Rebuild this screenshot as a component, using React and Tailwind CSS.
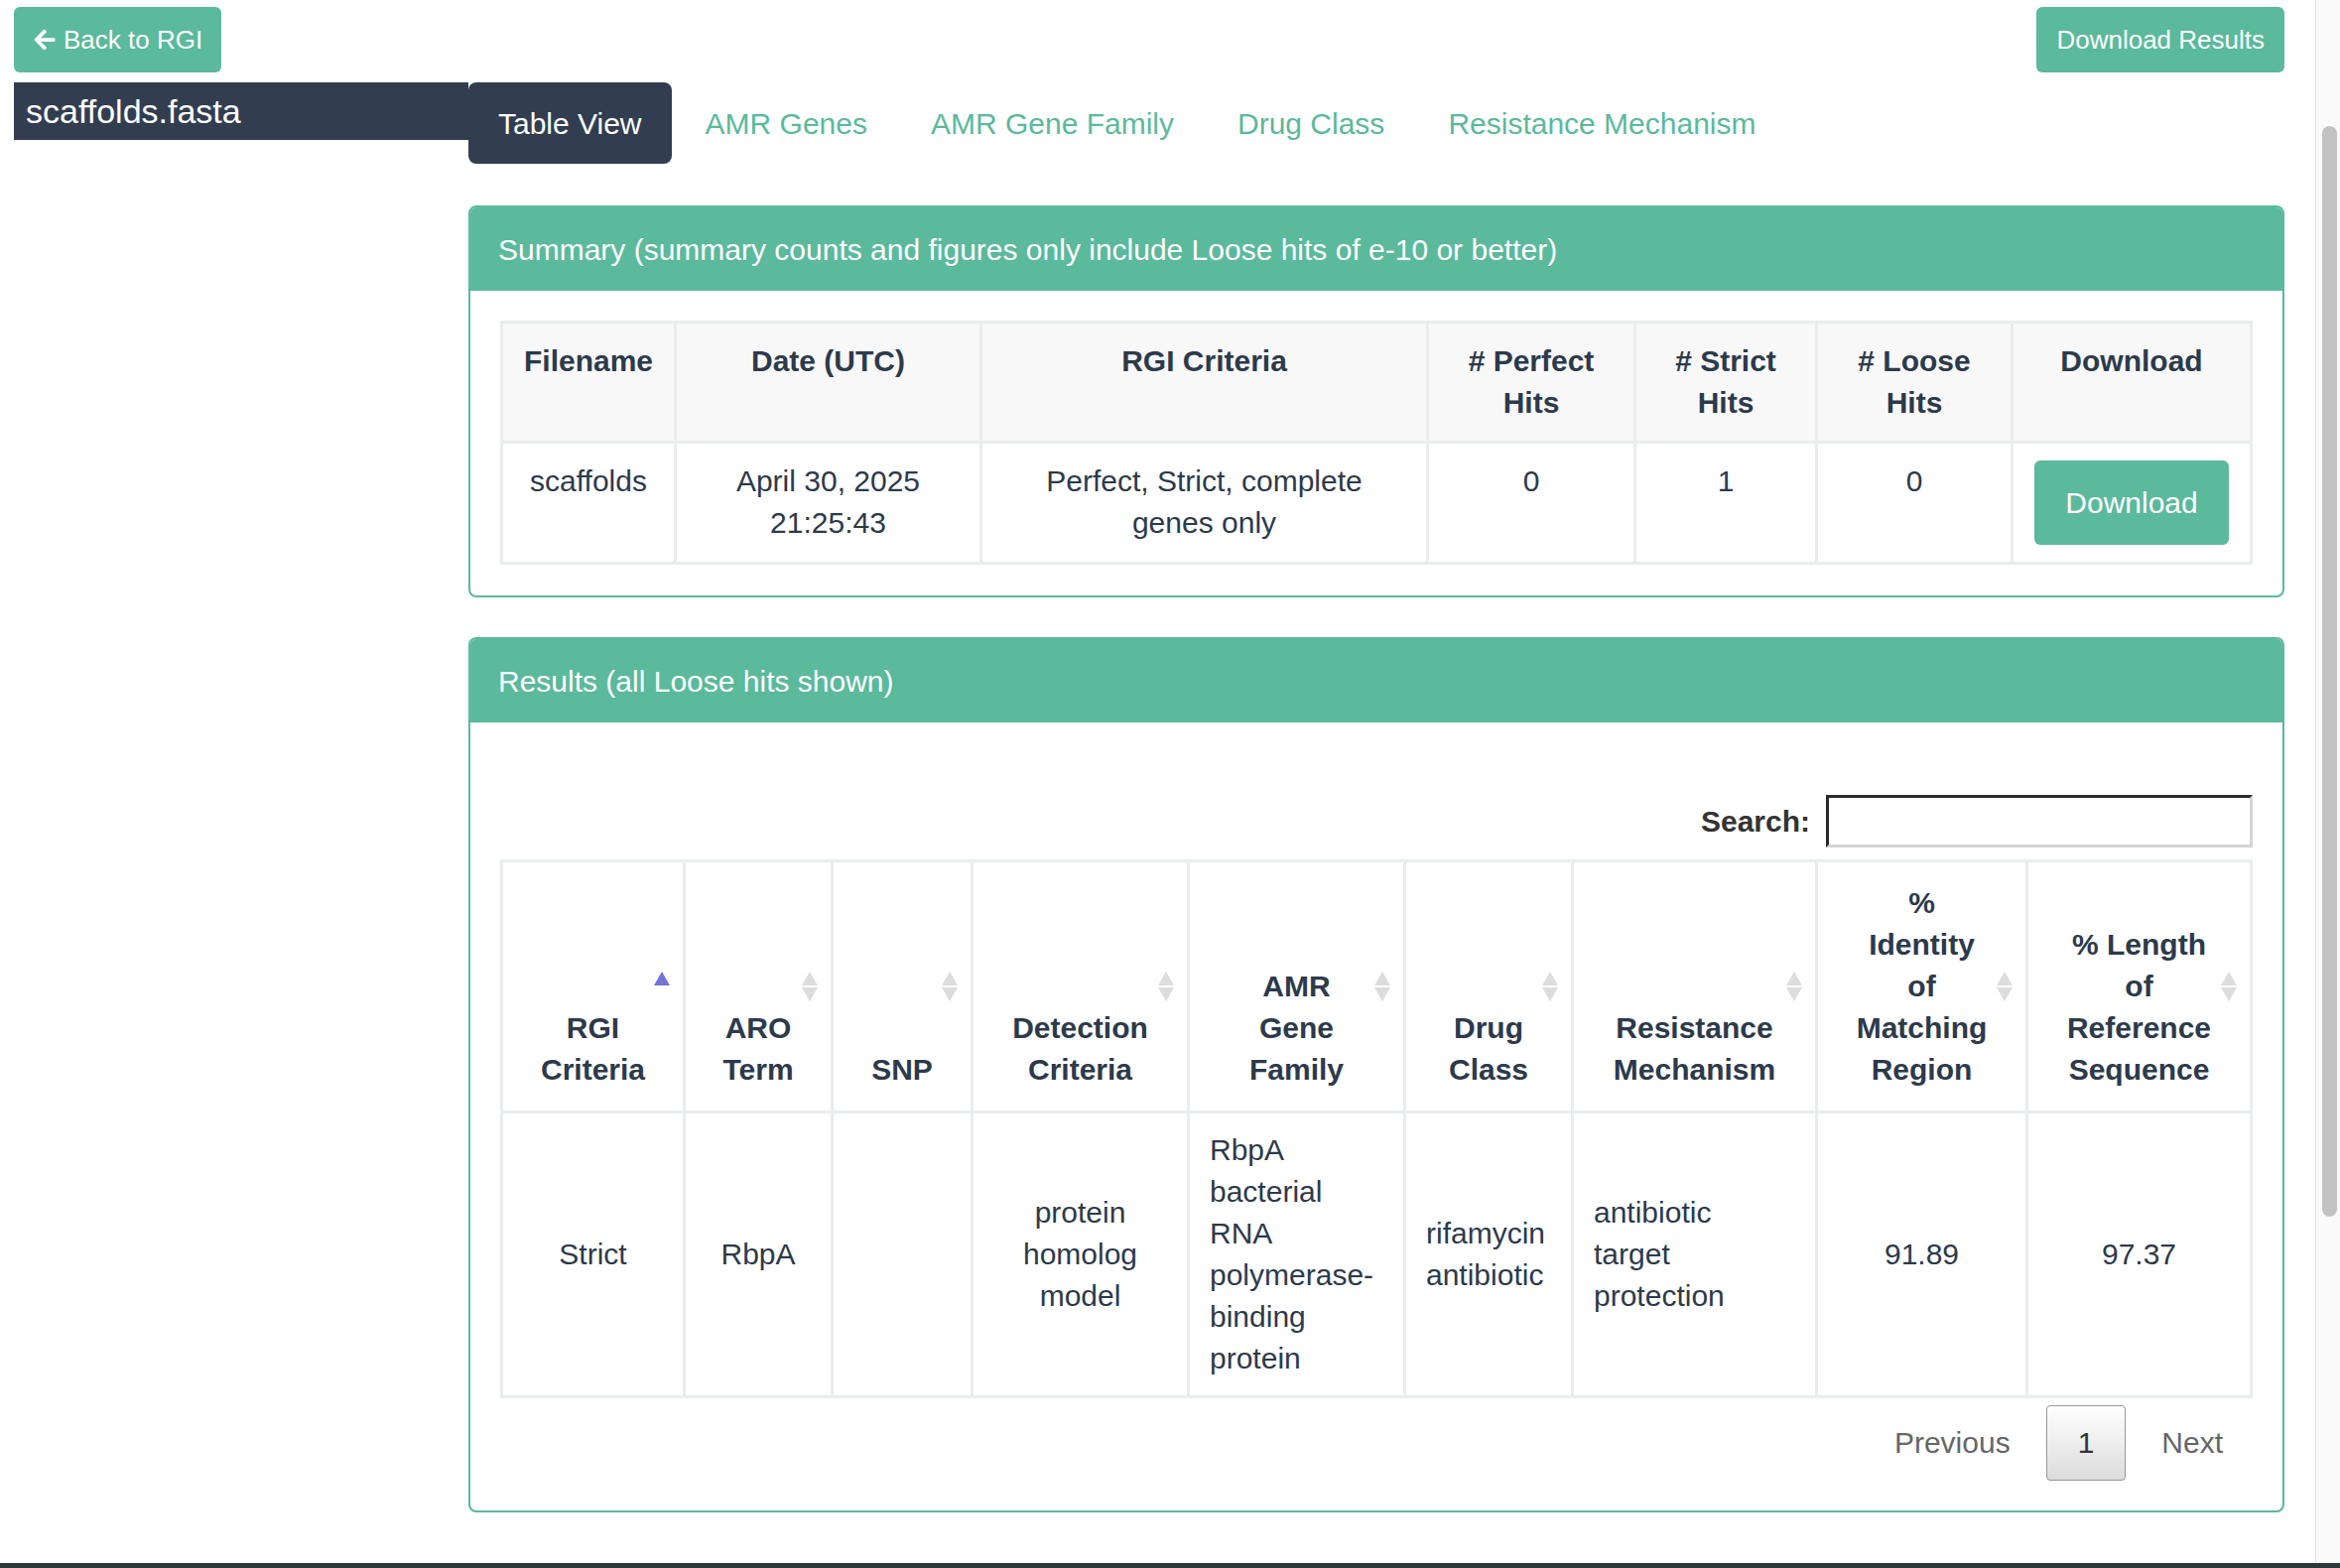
import { FaArrowLeft } from 'react-icons/fa'

const tabs = ['AMR Genes', 'AMR Gene Family', 'Drug Class', 'Resistance Mechanism']

const summaryCols = [175, 308, 450, 209, 183, 197, 241]
const summaryHead = [['Filename'], ['Date (UTC)'], ['RGI Criteria'], ['# Perfect', 'Hits'], ['# Strict', 'Hits'], ['# Loose', 'Hits'], ['Download']]

const resultCols = [184, 149, 141, 218, 218, 169, 246, 212, 226]
const resultHead = [
  { lines: ['RGI', 'Criteria'], sort: 'asc' },
  { lines: ['ARO', 'Term'] },
  { lines: ['SNP'] },
  { lines: ['Detection', 'Criteria'] },
  { lines: ['AMR', 'Gene', 'Family'] },
  { lines: ['Drug', 'Class'] },
  { lines: ['Resistance', 'Mechanism'] },
  { lines: ['%', 'Identity', 'of', 'Matching', 'Region'] },
  { lines: ['% Length', 'of', 'Reference', 'Sequence'] },
]
const resultRow = [
  { lines: ['Strict'] },
  { lines: ['RbpA'] },
  { lines: [] },
  { lines: ['protein', 'homolog', 'model'] },
  { lines: ['RbpA', 'bacterial', 'RNA', 'polymerase-', 'binding', 'protein'], left: true },
  { lines: ['rifamycin', 'antibiotic'], left: true },
  { lines: ['antibiotic', 'target', 'protection'], left: true },
  { lines: ['91.89'] },
  { lines: ['97.37'] },
]

const Lines = ({ lines }) => lines.map((l, i) => (
  <span key={i}>{i > 0 && <br />}{l}</span>
))

const SortIcon = ({ dir }) => (
  <svg className="absolute right-[13px] top-1/2 -translate-y-1/2" width="16" height="30" viewBox="0 0 16 30">
    {dir === 'asc' ? (
      <path d="M8 0 L16 14 L0 14 Z" fill="#7272d8" />
    ) : (
      <>
        <path d="M8 0 L16 14 L0 14 Z" fill="#dddddd" />
        <path d="M0 16 L16 16 L8 30 Z" fill="#dddddd" />
      </>
    )}
  </svg>
)

const Panel = ({ title, children, className = '' }) => (
  <div className={`overflow-hidden rounded-[8px] border-2 border-[#5bb99c] ${className}`}>
    <div className="flex h-[84px] items-center bg-[#5bb99c] px-[28px] text-[30px] text-white">{title}</div>
    {children}
  </div>
)

export default function App() {
  return (
    <div className="flex h-[1580px] w-full flex-col overflow-hidden bg-white font-['Liberation_Sans',Arial,sans-serif]">
      <div className="flex min-h-0 flex-1">
        <div className="flex-1 pl-[14px] pr-[31px] pt-[7px]">
          <div className="flex items-start justify-between">
            <button className="flex h-[66px] items-center gap-[7px] rounded-[6px] bg-[#5bb99c] px-[19px] text-[26px] text-white">
              <FaArrowLeft size={24} />
              Back to RGI
            </button>
            <button className="h-[66px] rounded-[6px] bg-[#5bb99c] px-[20px] text-[26px] text-white">Download Results</button>
          </div>

          <div className="mt-[10px] flex">
            <div className="w-[458px] shrink-0">
              <div className="flex h-[58px] items-center bg-[#323e50] pl-[12px] text-[34px] text-white">scaffolds.fasta</div>
            </div>

            <div className="w-[1830px]">
              <div className="flex h-[82px]">
                <div className="flex items-center rounded-[8px] bg-[#323e50] px-[30px] text-[30px] text-white">Table View</div>
                {tabs.map((t) => (
                  <div key={t} className="ml-[4px] flex items-center px-[30px] text-[30px] text-[#5bb99c]">{t}</div>
                ))}
              </div>

              <Panel title="Summary (summary counts and figures only include Loose hits of e-10 or better)" className="mt-[42px]">
                <div className="px-[30px] pb-[31px] pt-[30px]">
                  <table className="w-full table-fixed border-collapse text-[30px] leading-[42px] text-[#2c3a4b]">
                    <colgroup>
                      {summaryCols.map((w, i) => <col key={i} style={{ width: w }} />)}
                    </colgroup>
                    <thead>
                      <tr>
                        {summaryHead.map((h, i) => (
                          <th key={i} className="border-[3px] border-[#eaeded] bg-[#f8f8f8] px-[16px] py-[17px] text-center align-top font-bold">
                            <Lines lines={h} />
                          </th>
                        ))}
                      </tr>
                    </thead>
                    <tbody>
                      <tr>
                        <td className="border-[3px] border-[#eaeded] px-[16px] py-[17px] text-center align-top">scaffolds</td>
                        <td className="border-[3px] border-[#eaeded] px-[16px] py-[17px] text-center align-top">April 30, 2025<br />21:25:43</td>
                        <td className="border-[3px] border-[#eaeded] px-[16px] py-[17px] text-center align-top">Perfect, Strict, complete<br />genes only</td>
                        <td className="border-[3px] border-[#eaeded] px-[16px] py-[17px] text-center align-top">0</td>
                        <td className="border-[3px] border-[#eaeded] px-[16px] py-[17px] text-center align-top">1</td>
                        <td className="border-[3px] border-[#eaeded] px-[16px] py-[17px] text-center align-top">0</td>
                        <td className="border-[3px] border-[#eaeded] px-[16px] py-[17px] align-top">
                          <div className="mx-auto flex h-[85px] w-[196px] items-center justify-center rounded-[6px] bg-[#5bb99c] text-white">Download</div>
                        </td>
                      </tr>
                    </tbody>
                  </table>
                </div>
              </Panel>

              <Panel title="Results (all Loose hits shown)" className="mt-[40px]">
                <div className="px-[30px] pb-[30px] pt-[73px]">
                  <div className="flex items-center justify-end gap-[16px]">
                    <span className="text-[30px] font-bold text-[#333]">Search:</span>
                    <div className="h-[53px] w-[430px] border-[3px] border-b-[#d4d4d4] border-l-[#2a2a2a] border-r-[#d4d4d4] border-t-[#2a2a2a] bg-white" />
                  </div>

                  <table className="mt-[12px] w-full table-fixed border-collapse text-[30px] leading-[42px] text-[#2c3a4b]">
                    <colgroup>
                      {resultCols.map((w, i) => <col key={i} style={{ width: w }} />)}
                    </colgroup>
                    <thead>
                      <tr>
                        {resultHead.map((h, i) => (
                          <th key={i} className="relative border-[3px] border-[#eaeded] px-[20px] py-[20px] text-center align-bottom font-bold">
                            <Lines lines={h.lines} />
                            <SortIcon dir={h.sort} />
                          </th>
                        ))}
                      </tr>
                    </thead>
                    <tbody>
                      <tr>
                        {resultRow.map((c, i) => (
                          <td key={i} className={`border-[3px] border-[#eaeded] px-[20px] py-[16px] align-middle ${c.left ? 'text-left' : 'text-center'}`}>
                            <Lines lines={c.lines} />
                          </td>
                        ))}
                      </tr>
                    </tbody>
                  </table>

                  <div className="mt-[7px] flex justify-end gap-[6px] text-[30px] leading-[42px]">
                    <div className="border border-transparent px-[29px] py-[16px] text-[#666]">Previous</div>
                    <div className="rounded-[4px] border border-[#979797] bg-linear-to-b from-white to-[#dcdcdc] px-[31px] py-[16px] text-[#333]">1</div>
                    <div className="border border-transparent px-[29px] py-[16px] text-[#666]">Next</div>
                  </div>
                </div>
              </Panel>
            </div>
          </div>
        </div>

        <div className="w-[25px] shrink-0 border-l border-[#e4e4e4] bg-[#fafafa] pl-[6px] pt-[127px]">
          <div className="h-[1099px] w-[15px] rounded-full bg-[#c2c2c2]" />
        </div>
      </div>
      <div className="h-[5px] bg-[#2d3838]" />
    </div>
  )
}
